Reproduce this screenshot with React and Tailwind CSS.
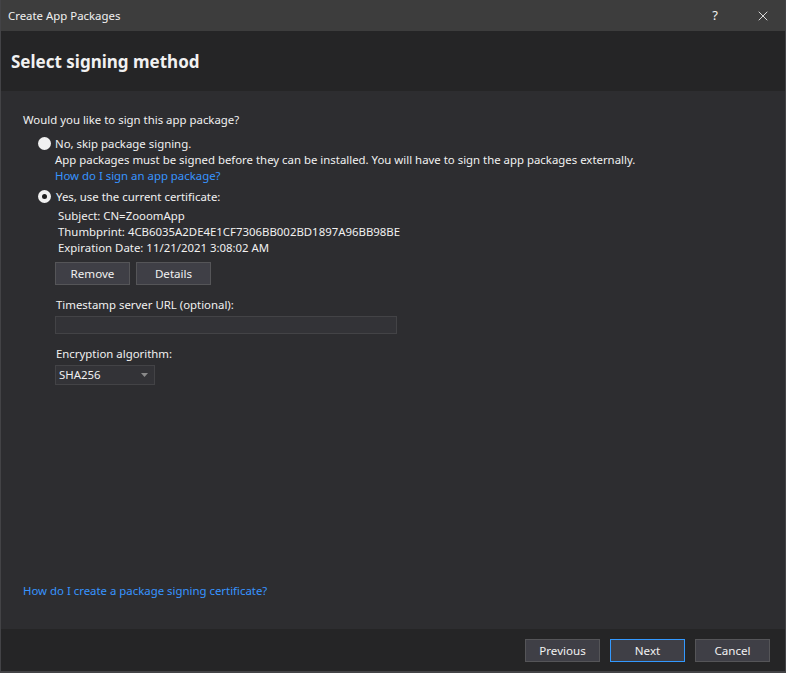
import { X } from 'lucide-react';

const font = { fontFamily: '"Segoe UI", "Noto Sans", sans-serif' };

function Radio({ checked }) {
  return (
    <span className="mt-[1px] flex h-[13px] w-[13px] shrink-0 items-center justify-center rounded-full bg-[#f1f1f1]">
      {checked && <span className="h-[5px] w-[5px] rounded-full bg-[#1e1e1e]" />}
    </span>
  );
}

function Btn({ children, primary }) {
  return (
    <button
      className={`h-[23px] w-[75px] border text-[11.6px] text-[#f1f1f1] bg-[#3f3f46] ${
        primary ? 'border-[#3399ff]' : 'border-[#555558]'
      }`}
    >
      {children}
    </button>
  );
}

export default function App() {
  return (
    <div
      className="flex h-[673px] w-[786px] flex-col border-x border-b-2 border-[#434346] bg-[#2d2d30] text-[11.4px] text-[#f1f1f1]"
      style={font}
    >
      <div className="flex h-[31px] shrink-0 items-center bg-[#3d3d3d] pl-[7px] pr-[14px]">
        <span>Create App Packages</span>
        <span className="ml-auto mr-[37px] text-[13px]">?</span>
        <X size={16} strokeWidth={1.3} />
      </div>

      <div className="flex h-[60px] shrink-0 items-center bg-[#252526] px-[10px] pt-[1px]">
        <h1 className="text-[17px] font-bold">Select signing method</h1>
      </div>

      <div className="flex flex-1 flex-col px-[22px] pt-[21px]">
        <p className="leading-[16px]">Would you like to sign this app package?</p>

        <div className="mt-[8px] ml-[15px] flex gap-[4px] leading-[16px]">
          <Radio />
          <div>
            <div>No, skip package signing.</div>
            <div>App packages must be signed before they can be installed. You will have to sign the app packages externally.</div>
            <div className="text-[#3794ff]">How do I sign an app package?</div>
          </div>
        </div>

        <div className="mt-[5px] ml-[15px] flex gap-[4px] leading-[16px]">
          <Radio checked />
          <div className="flex flex-col">
            <div className="ml-[1px]">Yes, use the current certificate:</div>
            <div className="ml-[3px] mt-[3px]">
              <div>Subject: CN=ZooomApp</div>
              <div>Thumbprint: 4CB6035A2DE4E1CF7306BB002BD1897A96BB98BE</div>
              <div>Expiration Date: 11/21/2021 3:08:02 AM</div>
            </div>
            <div className="mt-[6px] flex gap-[6px]">
              <Btn>Remove</Btn>
              <Btn>Details</Btn>
            </div>
            <div className="mt-[12px] ml-[1px]">Timestamp server URL (optional):</div>
            <div className="mt-[3px] h-[18px] w-[342px] border border-[#434346] bg-[#333337]" />
            <div className="mt-[12px] ml-[1px]">Encryption algorithm:</div>
            <div className="mt-[3px] flex h-[20px] w-[100px] items-center justify-between border border-[#434346] bg-[#333337] pl-[3px] pr-[6px]">
              <span>SHA256</span>
              <svg width="7" height="4" viewBox="0 0 7 4">
                <path d="M0 0h7L3.5 4z" fill="#8a8a8a" />
              </svg>
            </div>
          </div>
        </div>

        <div className="mt-auto mb-[30px] text-[#3794ff]">How do I create a package signing certificate?</div>
      </div>

      <div className="flex h-[42px] shrink-0 items-center justify-end gap-[10px] bg-[#252526] pt-[1px] pr-[15px]">
        <Btn>Previous</Btn>
        <Btn primary>Next</Btn>
        <Btn>Cancel</Btn>
      </div>
    </div>
  );
}
